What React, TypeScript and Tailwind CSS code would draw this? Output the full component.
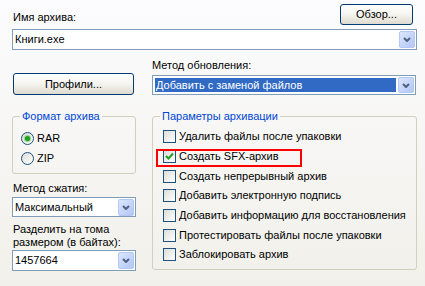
import React from 'react';

function DropButton({ tall }: { tall?: boolean }) {
  return (
    <span
      className={`flex w-[16px] items-center justify-center rounded-[2px] border border-[#B4C8F6] bg-linear-to-br from-[#DCE6FD] to-[#B2C6F4] ${
        tall ? 'h-[17px]' : 'h-[16px]'
      }`}
    >
      <svg width="8" height="5" viewBox="0 0 8 5">
        <path d="M1 1 L4 4 L7 1" fill="none" stroke="#4D6185" strokeWidth="2" />
      </svg>
    </span>
  );
}

function Combo({
  value,
  selected,
  className,
}: {
  value: string;
  selected?: boolean;
  className?: string;
}) {
  return (
    <div className={`flex items-center border border-[#7F9DB9] bg-white pr-[1px] ${className ?? ''}`}>
      {selected ? (
        <div className="mx-[2px] flex h-[14px] flex-1 items-center bg-[#316AC5] pl-[1px] text-white">
          {value}
        </div>
      ) : (
        <div className="flex-1 pl-[2px]">{value}</div>
      )}
      <DropButton tall={!selected} />
    </div>
  );
}

function XpButton({ label, className }: { label: string; className?: string }) {
  return (
    <button
      className={`flex items-center justify-center rounded-[3px] border border-[#003C74] bg-linear-to-b from-white via-[#F5F4EF] to-[#DEDAD0] text-black ${className ?? ''}`}
    >
      {label}
    </button>
  );
}

function Radio({ checked }: { checked?: boolean }) {
  return (
    <span className="flex h-[13px] w-[13px] items-center justify-center rounded-full border border-[#1C5180] bg-linear-to-br from-[#DCDCD7] to-white">
      {checked && <span className="h-[5px] w-[5px] rounded-full bg-[#21A121] shadow-[0_0_1px_1px_#8ED08E]" />}
    </span>
  );
}

function Check({ checked }: { checked?: boolean }) {
  return (
    <span className="flex h-[13px] w-[13px] items-center justify-center border border-[#1C5180] bg-linear-to-br from-[#DCDCD7] to-white">
      {checked && (
        <svg width="11" height="11" viewBox="0 0 11 11">
          <path d="M2 5 L4.5 7.5 L9 2.5" fill="none" stroke="#21A121" strokeWidth="2" />
        </svg>
      )}
    </span>
  );
}

const options = [
  'Удалить файлы после упаковки',
  'Создать SFX-архив',
  'Создать непрерывный архив',
  'Добавить электронную подпись',
  'Добавить информацию для восстановления',
  'Протестировать файлы после упаковки',
  'Заблокировать архив',
];

export default function App() {
  return (
    <div className="h-[286px] w-[425px] overflow-hidden bg-linear-to-b from-[#FCFCFE] to-[#F1F0EA] pl-[12px] pt-[4px] font-['Liberation_Sans',Arial,sans-serif] text-[11px] leading-[13px] text-black">
      <div className="flex w-[405px] items-start justify-between">
        <span className="mt-[7px] pl-[1px]">Имя архива:</span>
        <XpButton label="Обзор..." className="mr-[4px] h-[21px] w-[73px]" />
      </div>

      <Combo value="Книги.exe" className="mt-[4px] h-[21px] w-[405px]" />

      <div className="flex gap-[16px]">
        {/* left column */}
        <div className="flex w-[124px] flex-col">
          <XpButton label="Профили..." className="ml-[1px] mt-[23px] h-[22px] w-[121px]" />

          <fieldset className="mt-[14px] rounded-[3px] border border-[#D0D0BF] pb-[5px] pt-[5px] pl-[8px]">
            <legend className="ml-[-1px] px-[2px] leading-[14px] text-[#0046D5]">Формат архива</legend>
            <label className="flex h-[20px] items-center gap-[3px]">
              <Radio checked />
              <span>RAR</span>
            </label>
            <label className="flex h-[20px] items-center gap-[3px]">
              <Radio />
              <span>ZIP</span>
            </label>
          </fieldset>

          <span className="mt-[8px] pl-[1px]">Метод сжатия:</span>
          <Combo value="Максимальный" className="mt-[2px] h-[20px] w-[124px]" />

          <span className="mt-[6px] pl-[1px]">
            Разделить на тома
            <br />
            размером (в байтах):
          </span>
          <Combo value="1457664" className="mt-[1px] h-[21px] w-[124px]" />
        </div>

        {/* right column */}
        <div className="flex w-[265px] flex-col">
          <span className="mt-[9px]">Метод обновления:</span>
          <Combo value="Добавить с заменой файлов" selected className="mt-[3px] h-[20px] w-[264px]" />

          <fieldset className="mt-[14px] w-[265px] rounded-[3px] border border-[#D0D0BF] pb-[4px] pl-[10px] pt-[4px]">
            <legend className="ml-[-3px] px-[2px] leading-[14px] text-[#0046D5]">Параметры архивации</legend>
            {options.map((opt, i) => (
              <label key={opt} className="relative flex h-[19.67px] items-center gap-[3px]">
                <Check checked={i === 1} />
                <span>{opt}</span>
                {i === 1 && (
                  <span className="absolute left-[-7px] top-[2px] h-[18px] w-[146px] border-2 border-[#FF0000]" />
                )}
              </label>
            ))}
          </fieldset>
        </div>
      </div>
    </div>
  );
}
